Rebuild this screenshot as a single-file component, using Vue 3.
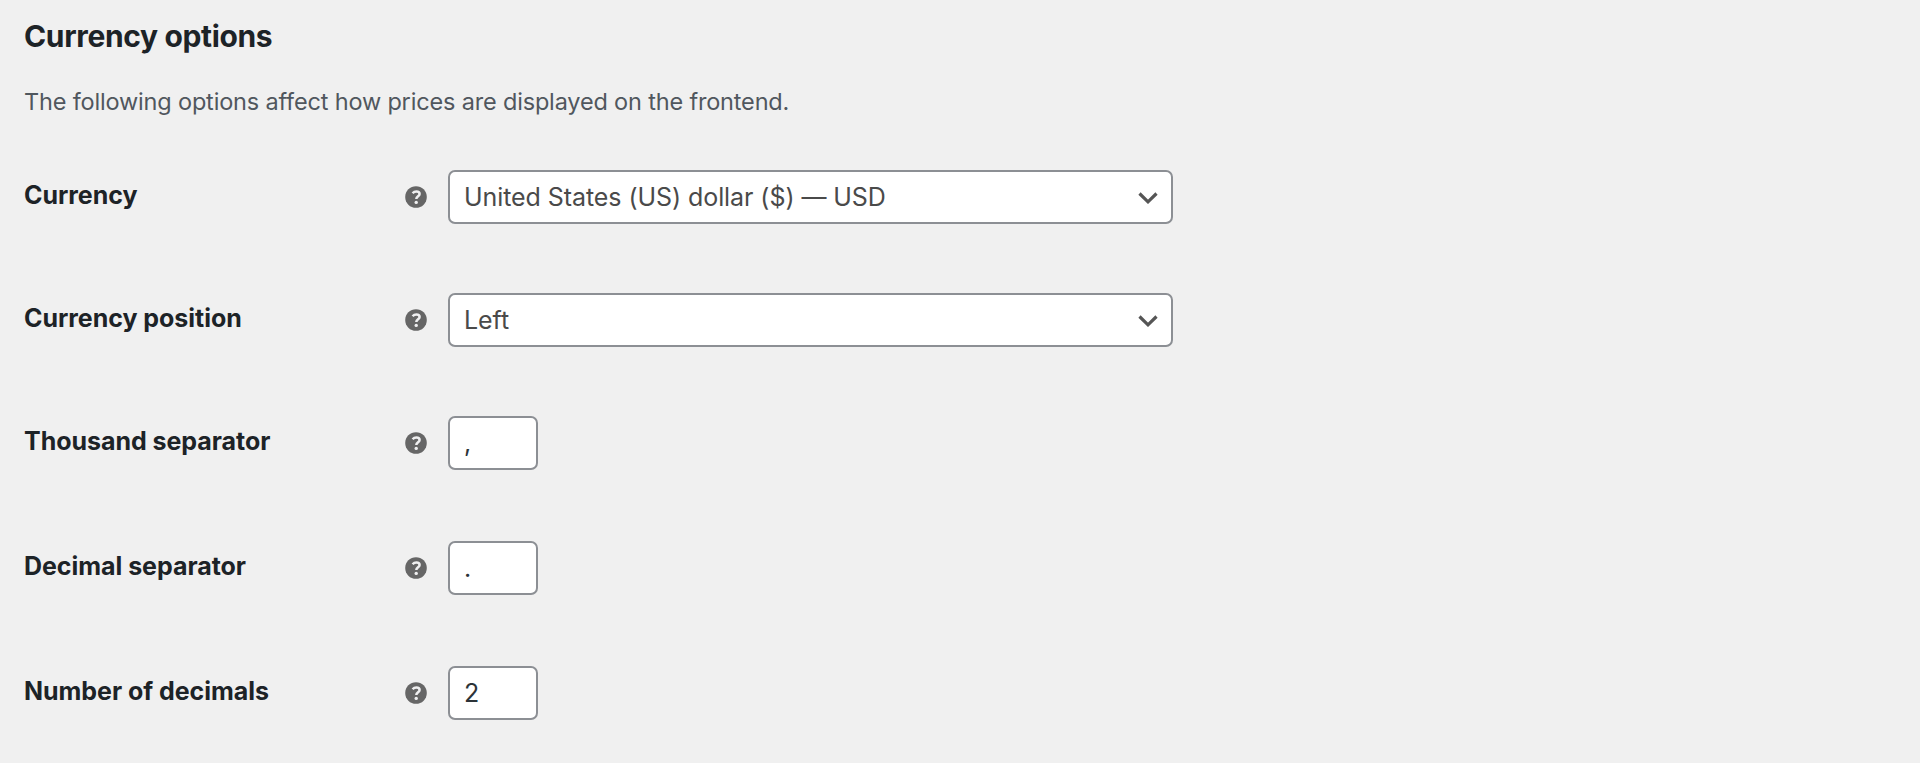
<template>
  <form class="settings" @submit.prevent>
    <h2 class="title">Currency options</h2>
    <p class="description">
      The following options affect how prices are displayed on the frontend.
    </p>
    <div
      v-for="field in fields"
      :key="field.id"
      class="form-row"
      :class="'row-' + field.type"
    >
      <label :for="field.id">{{ field.label }}</label>
      <span class="help-tip">
        <svg viewBox="0 0 22 22" width="22" height="22">
          <circle cx="11" cy="11" r="10.8" fill="#666666" />
          <path
            d="M7.6 7.3C8.6 6.1 9.9 5.5 11.4 5.5C13.4 5.5 14.6 6.4 14.6 7.9C14.6 10.3 11.3 10.2 11.3 13"
            fill="none"
            stroke="#f0f0f1"
            stroke-width="2.5"
          />
          <circle cx="11.2" cy="16.4" r="1.7" fill="#f0f0f1" />
        </svg>
      </span>
      <div v-if="field.type === 'select'" class="select-wrap">
        <select :id="field.id" v-model="values[field.id]">
          <option v-for="opt in field.options" :key="opt" :value="opt">
            {{ opt }}
          </option>
        </select>
        <svg class="chevron" viewBox="0 0 20 12" width="20" height="12">
          <path
            d="M1.5 1.5L10 9.8L18.5 1.5"
            fill="none"
            stroke="#555555"
            stroke-width="3.2"
          />
        </svg>
      </div>
      <input v-else :id="field.id" v-model="values[field.id]" type="text" />
    </div>
  </form>
</template>

<script setup>
import { ref } from 'vue'

const fields = [
  {
    id: 'currency',
    label: 'Currency',
    type: 'select',
    options: ['United States (US) dollar ($) — USD']
  },
  {
    id: 'position',
    label: 'Currency position',
    type: 'select',
    options: ['Left']
  },
  { id: 'thousand', label: 'Thousand separator', type: 'text' },
  { id: 'decimal', label: 'Decimal separator', type: 'text' },
  { id: 'decimals', label: 'Number of decimals', type: 'text' }
]

const values = ref({
  currency: 'United States (US) dollar ($) — USD',
  position: 'Left',
  thousand: ',',
  decimal: '.',
  decimals: '2'
})
</script>

<style>
body {
  background: #f0f0f0;
}
</style>

<style scoped>
.settings {
  box-sizing: border-box;
  height: 763px;
  overflow: hidden;
  padding: 16px 24px 0;
  font-family: Inter, sans-serif;
  color: #1d2327;
}
.title {
  margin: 0;
  font-size: 30px;
  line-height: 40px;
  font-weight: 650;
  letter-spacing: -0.35px;
}
.description {
  margin: 28px 0 0;
  height: 85.5px;
  font-size: 23.5px;
  line-height: 36px;
  font-weight: 430;
  letter-spacing: -0.17px;
  color: #50575e;
}
.form-row {
  display: flex;
  align-items: flex-start;
  height: 125px;
}
.row-select {
  height: 123.2px;
}
label {
  width: 381px;
  padding-top: 6.4px;
  font-size: 25px;
  line-height: 38px;
  font-weight: 650;
  letter-spacing: -0.04px;
}
.help-tip {
  width: 43px;
  padding-top: 16.5px;
}
.help-tip svg {
  display: block;
}
.select-wrap {
  position: relative;
  width: 725px;
}
select,
input {
  box-sizing: border-box;
  display: block;
  height: 54.5px;
  margin: 0;
  padding: 0 14px;
  border: 2px solid #8c8f94;
  border-radius: 7px;
  background: #fff;
  font-family: inherit;
  font-size: 25px;
  letter-spacing: -0.07px;
  color: #2c3338;
  outline: none;
}
select {
  width: 100%;
  appearance: none;
  color: #4a4a4a;
}
input {
  width: 90px;
}
.chevron {
  position: absolute;
  top: 22px;
  right: 15px;
  pointer-events: none;
}
</style>
